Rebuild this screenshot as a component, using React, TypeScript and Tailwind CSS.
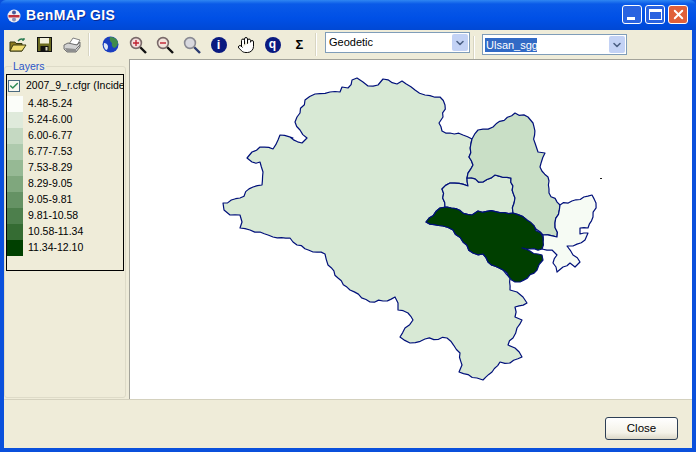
import { Check, ChevronDown, Hand, X } from "lucide-react";
import type { ReactNode } from "react";

const legend = [
  { label: "4.48-5.24", color: "bg-[#fbfdf9]" },
  { label: "5.24-6.00", color: "bg-[#dfeadb]" },
  { label: "6.00-6.77", color: "bg-[#c5d9c2]" },
  { label: "6.77-7.53", color: "bg-[#aecaad]" },
  { label: "7.53-8.29", color: "bg-[#96b994]" },
  { label: "8.29-9.05", color: "bg-[#7fa77d]" },
  { label: "9.05-9.81", color: "bg-[#659264]" },
  { label: "9.81-10.58", color: "bg-[#4d7f4c]" },
  { label: "10.58-11.34", color: "bg-[#356c33]" },
  { label: "11.34-12.10", color: "bg-[#004000]" },
];

// region outlines, in page coordinates
const MAIN: number[] = [
  290,137, 302,143, 307,138, 300,130, 295,122, 297,117, 300,113, 305,100, 315,94, 330,92, 340,92, 342,87, 348,88, 352,80, 357,78, 363,82, 368,86, 378,85, 383,79, 397,84, 402,81, 415,90, 425,95, 440,97, 445,105, 443,117, 439,123, 442,131, 450,133, 463,135, 472,139, 469,157, 473,165, 467,178, 468,186, 450,183, 442,189, 445,207, 440,208, 426,222, 443,226, 453,230, 463,242, 473,253, 483,254, 488,262, 503,270, 510,278, 510,290, 517,292, 523,297, 527,303, 515,307, 515,317, 522,320, 517,328, 513,338, 508,345, 515,348, 522,357, 510,363, 500,362, 492,372, 483,380, 477,378, 459,372, 462,365, 460,353, 447,338, 425,339, 410,343, 400,337, 405,328, 413,320, 408,313, 398,310, 398,303, 395,297, 383,301, 370,302, 350,290, 338,278, 328,265, 325,254, 313,252, 297,245, 290,238, 273,237, 260,232, 250,230, 240,228, 242,222, 240,215, 230,215, 224,210, 223,203, 240,198, 253,187, 262,185, 263,172, 260,162, 252,162, 247,158, 252,152, 260,147, 273,149, 278,140, 280,135, 293,138,
];
const UPPER: number[] = [
  472,139, 478,130, 493,127, 515,113, 528,117, 533,123, 535,143, 538,152, 545,153, 540,167, 548,177, 549,193, 560,205, 555,223, 557,237, 543,235, 527,220, 513,213, 515,198, 511,178, 495,175, 483,182, 467,178, 473,165, 469,157,
];
const SMALL: number[] = [
  467,178, 483,182, 495,175, 511,178, 515,198, 513,213, 478,211, 472,215, 447,207, 445,207, 442,189, 450,183, 468,186,
];
const DARK: number[] = [
  426,222, 440,208, 447,207, 472,215, 478,211, 513,213, 527,220, 543,237, 542,249, 530,249, 522,248, 530,251, 542,255, 543,260, 537,270, 520,282, 515,282, 503,270, 488,262, 483,254, 473,253, 463,242, 453,230, 443,226,
];
const EAST: number[] = [
  560,205, 592,195, 596,203, 593,217, 588,228, 580,228, 580,234, 588,233, 585,240, 573,246, 567,246, 573,255, 580,262, 575,267, 570,263, 563,267, 557,272, 553,263, 557,255, 552,250, 542,249, 543,235, 557,237, 555,223,
];

// wiggle each edge a little; the offset only depends on the two end points,
// so an edge shared by two regions stays shared
function rough(points: number[]) {
  let d = "";
  const count = points.length / 2;
  for (let i = 0; i < count; i++) {
    const x1 = points[i * 2];
    const y1 = points[i * 2 + 1];
    const x2 = points[((i + 1) % count) * 2];
    const y2 = points[((i + 1) % count) * 2 + 1];
    d += `${i === 0 ? "M" : "L"}${x1} ${y1} `;
    const swap = x1 > x2 || (x1 === x2 && y1 > y2);
    const [ax, ay, bx, by] = swap ? [x2, y2, x1, y1] : [x1, y1, x2, y2];
    const len = Math.hypot(bx - ax, by - ay);
    const steps = Math.floor(len / 4);
    for (let s = 1; s < steps; s++) {
      const t = swap ? 1 - s / steps : s / steps;
      const seed = Math.sin(ax * 12.9 + ay * 78.2 + bx * 37.7 + by * 11.3 + Math.round(t * steps) * 4.1) * 4375.5;
      const off = (seed - Math.floor(seed) - 0.5) * 2.6;
      const px = ax + (bx - ax) * t - ((by - ay) / len) * off;
      const py = ay + (by - ay) * t + ((bx - ax) / len) * off;
      d += `L${px.toFixed(1)} ${py.toFixed(1)} `;
    }
  }
  return d + "Z";
}

function ToolButton({ children }: { children: ReactNode }) {
  return <div className="w-[27px] h-[29px] flex items-center justify-center">{children}</div>;
}

function Separator() {
  return <div className="w-0.5 h-[23px] mt-[3px] bg-[#d8d5c2] border-r border-white" />;
}

function Lens({ color, handle, fill, children }: { color: string; handle: string; fill: string; children?: ReactNode }) {
  return (
    <svg width="18" height="18" viewBox="0 0 18 18">
      <line x1="11" y1="11" x2="17" y2="17" stroke={handle} strokeWidth="2.4" />
      <circle cx="7" cy="7" r="5.4" fill={fill} stroke={color} strokeWidth="1.6" />
      {children}
    </svg>
  );
}

function Combo({ text, selected, className }: { text: string; selected?: boolean; className: string }) {
  return (
    <div className={`w-[145px] h-[21px] bg-white border border-[#7f9db9] flex items-center justify-between pl-[2px] pr-[1px] ${className}`}>
      {selected ? (
        <span className="bg-[#316ac5] text-white text-[11px] leading-[14px] px-[1px] w-[52px]">{text}</span>
      ) : (
        <span className="text-black text-[11px] pl-[1px]">{text}</span>
      )}
      <div className="w-4 h-[17px] bg-[#c3d2f5] rounded-[2px] flex items-center justify-center">
        <ChevronDown size={12} strokeWidth={3.2} className="text-[#4d6185]" />
      </div>
    </div>
  );
}

export default function App() {
  return (
    <div className="w-[696px] h-[452px] flex flex-col bg-[#0a50dc] font-['Liberation_Sans',Arial,sans-serif] overflow-hidden">
      {/* Title bar */}
      <div className="h-[30px] shrink-0 flex items-center pl-[7px] pr-[7px] rounded-t-[6px] bg-[linear-gradient(180deg,#2f86f2_0px,#0a5ae8_4px,#0050e6_18px,#0048d4_30px)]">
        <svg width="14" height="14" viewBox="0 0 14 14" className="mr-[5px] mt-[1px]">
          <circle cx="7" cy="7" r="6.5" fill="#f1eef2" />
          <path d="M1.5 6 H12.5 V8.5 H1.5 Z" fill="#c0303a" />
          <circle cx="7" cy="3.5" r="2" fill="#4a5a9a" />
          <circle cx="7" cy="10.5" r="2" fill="#8a90b8" />
        </svg>
        <span className="text-white text-[14px] font-bold tracking-[0.4px] [text-shadow:1px_1px_0_#0a2a90]">BenMAP GIS</span>
        <div className="ml-auto flex gap-[3px] mb-[1px] mr-[1px]">
          <div className="w-5 h-[19px] rounded-[3px] border border-white bg-[#2a63e0] flex items-end pl-1 pb-[3px]">
            <div className="w-2 h-[3px] bg-white" />
          </div>
          <div className="w-5 h-[19px] rounded-[3px] border border-white bg-[#2a63e0] flex items-center justify-center">
            <div className="w-[13px] h-[11px] border border-white border-t-[3px]" />
          </div>
          <div className="w-5 h-[19px] rounded-[3px] border border-white bg-[#e0603a] flex items-center justify-center">
            <X size={15} strokeWidth={3} className="text-white" />
          </div>
        </div>
      </div>

      {/* Window body */}
      <div className="flex-1 mx-1 mb-1 bg-[#efecd9] flex flex-col min-h-0">
        {/* Toolbar */}
        <div className="h-[29px] shrink-0 flex items-start">
          <ToolButton>
            <svg width="18" height="16" viewBox="0 0 18 16">
              <path d="M1 5 H6 L7 6.5 H13 V14 H1 Z" fill="#8a7a20" stroke="#3a3a10" />
              <path d="M1 14 L4 8 H17 L13 14 Z" fill="#f0dc70" stroke="#3a3a10" />
              <path d="M9 4 Q12 0.5 15 3 M15 3 L13 3 M15 3 L15 1" fill="none" stroke="#2a7a50" strokeWidth="1.3" />
            </svg>
          </ToolButton>
          <ToolButton>
            <svg width="15" height="15" viewBox="0 0 15 15">
              <rect x="0.5" y="0.5" width="14" height="14" fill="#6a6a20" stroke="#111" />
              <rect x="3" y="1" width="9" height="5.5" fill="#f1efdc" />
              <rect x="3.5" y="9" width="8" height="5.5" fill="#111" />
              <rect x="8.5" y="10" width="2" height="3.5" fill="#d8d6c0" />
            </svg>
          </ToolButton>
          <ToolButton>
            <svg width="18" height="16" viewBox="0 0 18 16">
              <path d="M6 7 L10 1 L17 3 L14 8 Z" fill="#ffffff" stroke="#808080" />
              <path d="M1 8 L5 6 L14 8 L17 5 V10 L13 15 H4 L1 12 Z" fill="#d2d2d2" stroke="#707070" />
              <path d="M2 11 L13 12 V15 H4 Z" fill="#8e8e8e" />
              <path d="M13 12 L17 8" stroke="#707070" />
            </svg>
          </ToolButton>
          <div className="w-[3px] shrink-0" />
          <Separator />
          <div className="w-[7px] shrink-0" />
          <ToolButton>
            <svg width="17" height="17" viewBox="0 0 17 17">
              <circle cx="8.5" cy="8.5" r="8" fill="#1a3ec0" />
              <path d="M8 1 Q14 1 16 6 Q16 11 12 12 Q9 10 10 7 Q7 5 8 1 Z" fill="#3f8a4a" />
              <path d="M2 7 Q5 7 6 10 Q6 14 4 14 Q1 11 2 7 Z" fill="#e0e8f4" />
            </svg>
          </ToolButton>
          <ToolButton>
            <Lens color="#7a6a6a" handle="#111" fill="#f4dcdc">
              <path d="M7 4 V10 M4 7 H10" stroke="#c02030" strokeWidth="1.4" />
            </Lens>
          </ToolButton>
          <ToolButton>
            <Lens color="#7a6a6a" handle="#111" fill="#f4e4dc">
              <path d="M4 7 H10" stroke="#c02030" strokeWidth="1.4" />
            </Lens>
          </ToolButton>
          <ToolButton>
            <Lens color="#8a8a92" handle="#2a3a70" fill="#d8d8de" />
          </ToolButton>
          <ToolButton>
            <div className="w-4 h-4 rounded-full bg-[#0a1a80] flex items-center justify-center text-white text-[13px] font-bold leading-none">i</div>
          </ToolButton>
          <ToolButton>
            <Hand size={18} strokeWidth={1.3} fill="#ffffff" className="text-black" />
          </ToolButton>
          <ToolButton>
            <div className="w-4 h-4 rounded-full bg-[#0a1a80] flex items-center justify-center text-white text-[12px] font-bold leading-none pb-[2px]">q</div>
          </ToolButton>
          <ToolButton>
            <span className="text-black text-[13px] font-bold leading-none">Σ</span>
          </ToolButton>
          <div className="w-[2px] shrink-0" />
          <Separator />
          <div className="w-2 shrink-0" />
          <Combo text="Geodetic" className="mt-[2px]" />
          <div className="w-[2px] shrink-0" />
          <div className="ml-[1px] mr-[7px] mt-[3px]"><Separator /></div>
          <Combo text="Ulsan_sgg" selected className="mt-[4px]" />
        </div>

        {/* Layers panel and map */}
        <div className="h-[340px] shrink-0 flex">
          <div className="w-[125px] shrink-0 relative">
            <div className="h-[332px] mt-[7px] mr-[3px] border border-[#dedbc8] rounded-[3px] pl-[1px] pt-[7px]">
              <div className="w-[118px] h-[197px] border border-black overflow-hidden">
                <div className="flex items-center h-[21px] pl-[1px] whitespace-nowrap">
                  <div className="w-3 h-3 shrink-0 border border-[#4a6a80] bg-[#f8f8f2] flex items-center justify-center">
                    <Check size={10} strokeWidth={3.5} className="text-[#2e8b57]" />
                  </div>
                  <span className="ml-[6px] text-[10.5px] text-black">2007_9_r.cfgr (Incidence)</span>
                </div>
                {legend.map((row) => (
                  <div key={row.label} className="h-4 flex items-center">
                    <div className={`w-4 h-4 shrink-0 ${row.color}`} />
                    <span className="ml-[5px] text-[10.5px] text-black">{row.label}</span>
                  </div>
                ))}
              </div>
            </div>
            <span className="absolute left-[8px] top-[1px] bg-[#efecd9] px-[1px] text-[10.5px] leading-[12px] text-[#2a55c8]">Layers</span>
          </div>

          <div className="flex-1 bg-white border-t border-l border-[#a3a39a] overflow-hidden">
            <svg viewBox="130 60 562 339" className="block w-full h-full">
              <g stroke="#00107a" strokeWidth="1.2" strokeLinejoin="round">
                <path d={rough(MAIN)} fill="#d8e9d5" />
                <path d={rough(SMALL)} fill="#d8e9d5" />
                <path d={rough(UPPER)} fill="#c9dfc6" />
                <path d={rough(EAST)} fill="#f6fbf4" />
                <path d={rough(DARK)} fill="#003f00" />
              </g>
              <rect x="600" y="178" width="2" height="1" fill="#222" />
            </svg>
          </div>
        </div>

        {/* Footer */}
        <div className="flex-1 flex justify-end pt-[17px] pr-[14px] border-t border-[#d4d1be]">
          <button className="w-[73px] h-[23px] rounded-[3px] border border-[#2e3f55] bg-[linear-gradient(180deg,#ffffff,#f4f2e8_70%,#dcd8c8)] text-[11.5px] text-black">
            Close
          </button>
        </div>
      </div>
    </div>
  );
}
